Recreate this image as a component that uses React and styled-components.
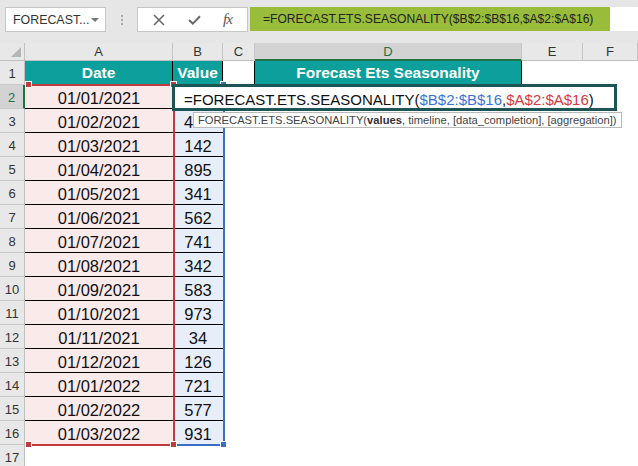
import React from "react";
import styled, { createGlobalStyle } from "styled-components";

const GlobalStyle = createGlobalStyle`
  html, body { margin: 0; padding: 0; background: #ffffff; }
  body { font-family: "Liberation Sans", Arial, sans-serif; overflow: hidden; }
`;

const ROW_HDR = 25;
const COLS = [148, 50, 32, 267, 61];
const ROW_H = 24;
const HEAD_H = 18;
const TEAL = "#0d9f9c";
const RED = "#c23a3c";
const BLUE = "#3a6fc8";
const GREEN = "#217346";

const Page = styled.div`
  width: 638px;
  height: 466px;
  overflow: hidden;
  background: #fff;
`;

const Toolbar = styled.div`
  height: 43px;
  box-sizing: border-box;
  background: #e6e6e6;
  display: flex;
  align-items: flex-start;
  padding: 7px 0 0 5px;
`;

const NameBox = styled.div`
  width: 101px;
  height: 25px;
  box-sizing: border-box;
  background: #fff;
  border: 1px solid #c6c6c6;
  display: flex;
  align-items: center;
  justify-content: space-between;
  padding: 0 6px 0 7px;
  font-size: 12.4px;
  color: #333;
`;

const Caret = styled.span`
  width: 0;
  height: 0;
  border-left: 4px solid transparent;
  border-right: 4px solid transparent;
  border-top: 4px solid #777;
  margin-top: 1px;
`;

const Grip = styled.div`
  width: 31px;
  height: 25px;
  display: flex;
  flex-direction: column;
  align-items: center;
  justify-content: center;
  gap: 2px;
  span {
    width: 2px;
    height: 2px;
    background: #a8a8a8;
  }
`;

const IconBox = styled.div`
  width: 111px;
  height: 25px;
  box-sizing: border-box;
  background: #fff;
  border: 1px solid #c6c6c6;
  display: flex;
  align-items: center;
  justify-content: space-around;
  padding: 0 4px;
  color: #6a6a6a;
`;

const Fx = styled.span`
  font-family: "Liberation Serif", "Times New Roman", serif;
  font-style: italic;
  font-size: 15px;
  color: #555;
  letter-spacing: -1px;
`;

const FormulaBox = styled.div`
  flex: 1;
  height: 24px;
  margin-left: 2px;
  background: #fff;
  display: flex;
`;

const FormulaFill = styled.div`
  width: 360px;
  background: #99bd3b;
  display: flex;
  align-items: center;
  padding-left: 13px;
  box-sizing: border-box;
  font-size: 12.1px;
  color: #222;
  white-space: nowrap;
`;

const Sheet = styled.div`
  position: relative;
`;

const Grid = styled.div`
  display: grid;
  grid-template-columns: ${ROW_HDR}px ${COLS.map((c) => c + "px").join(" ")} 1fr;
  grid-template-rows: ${HEAD_H}px repeat(17, ${ROW_H}px);
`;

const Corner = styled.div`
  background: #e8e8e8;
  border-right: 1px solid #c0c0c0;
  border-bottom: 1px solid #c0c0c0;
  box-sizing: border-box;
  position: relative;
  &::after {
    content: "";
    position: absolute;
    right: 3px;
    bottom: 3px;
    width: 0;
    height: 0;
    border-left: 10px solid transparent;
    border-bottom: 10px solid #b5b5b5;
  }
`;

const ColHead = styled.div`
  background: ${(p) => (p.$active ? "#d3d3d3" : "#e8e8e8")};
  color: ${(p) => (p.$active ? GREEN : "#333")};
  border-right: 1px solid #c6c6c6;
  border-bottom: ${(p) => (p.$active ? `2px solid ${GREEN}` : "1px solid #c0c0c0")};
  box-sizing: border-box;
  font-size: 13px;
  line-height: 17px;
  text-align: center;
`;

const RowHead = styled.div`
  background: ${(p) => (p.$active ? "#d3d3d3" : "#e8e8e8")};
  color: ${(p) => (p.$active ? GREEN : "#333")};
  border-right: ${(p) => (p.$active ? `2px solid ${GREEN}` : "1px solid #c0c0c0")};
  border-bottom: 1px solid #c8c8c8;
  box-sizing: border-box;
  font-size: 13px;
  padding-top: 2px;
  line-height: 21px;
  text-align: center;
`;

const fills = {
  teal: TEAL,
  pink: "#faeaea",
  blue: "#e8eef9",
  white: "#ffffff",
};

const Cell = styled.div`
  background: ${(p) => fills[p.$fill || "white"]};
  color: ${(p) => (p.$fill === "teal" ? "#fff" : "#111")};
  font-weight: ${(p) => (p.$head ? 700 : 400)};
  font-size: ${(p) => (p.$head ? "15.5px" : "16.5px")};
  line-height: ${(p) => (p.$head ? "24px" : "22px")};
  padding-top: ${(p) => (p.$head ? 0 : 2)}px;
  text-align: center;
  white-space: nowrap;
  overflow: hidden;
  box-sizing: border-box;
  border-right: ${(p) => (p.$edge ? "1px solid #000" : "none")};
  border-bottom: ${(p) => (p.$line ? "1px solid #000" : "none")};
`;

const Range = styled.div`
  position: absolute;
  box-sizing: border-box;
  border: 2px solid ${(p) => p.$color};
  border-left: none;
  pointer-events: none;
`;

const Handle = styled.div`
  position: absolute;
  width: 5px;
  height: 5px;
  background: ${(p) => p.$color};
  outline: 1px solid #fff;
`;

const EditBox = styled.div`
  position: absolute;
  left: 172px;
  top: ${HEAD_H + ROW_H - 1}px;
  width: 445px;
  height: 27px;
  box-sizing: border-box;
  border: 3px solid #1d5455;
  background: #fff;
  padding: 5px 0 0 9px;
  font-size: 15px;
  line-height: 16px;
  color: #111;
  white-space: nowrap;
`;

const Ref = styled.span`
  color: ${(p) => p.$color};
`;

const Tip = styled.div`
  position: absolute;
  left: 193px;
  top: 69px;
  height: 16px;
  box-sizing: border-box;
  border: 1px solid #b9b9b9;
  background: #fff;
  padding: 0 4px;
  font-size: 11.2px;
  line-height: 14px;
  color: #444;
  white-space: nowrap;
  b { font-weight: 700; color: #333; }
`;

const dates = [
  "01/01/2021", "01/02/2021", "01/03/2021", "01/04/2021", "01/05/2021",
  "01/06/2021", "01/07/2021", "01/08/2021", "01/09/2021", "01/10/2021",
  "01/11/2021", "01/12/2021", "01/01/2022", "01/02/2022", "01/03/2022",
];
// B2 sits under the cell editor, B3 mostly under the tooltip
const values = ["", 4, 142, 895, 341, 562, 741, 342, 583, 973, 34, 126, 721, 577, 931];

const letters = ["A", "B", "C", "D", "E", "F"];

function CloseIcon() {
  return (
    <svg width="12" height="12" viewBox="0 0 12 12">
      <path d="M1 1 L11 11 M11 1 L1 11" stroke="#6a6a6a" strokeWidth="1.6" />
    </svg>
  );
}

function CheckIcon() {
  return (
    <svg width="13" height="10" viewBox="0 0 13 10">
      <path d="M1 5 L4.8 8.6 L12 1.2" stroke="#6a6a6a" strokeWidth="2" fill="none" />
    </svg>
  );
}

const ClipLeft = styled.span`
  display: inline-block;
  width: 100%;
  text-align: left;
  padding-left: 11px;
  box-sizing: border-box;
`;

export default function App() {
  const left = (i) => ROW_HDR + COLS.slice(0, i).reduce((a, b) => a + b, 0);
  const rangeTop = HEAD_H + ROW_H - 1;
  const rangeH = ROW_H * 15 + 2;

  return (
    <Page>
      <GlobalStyle />
      <Toolbar>
        <NameBox>
          FORECAST...
          <Caret />
        </NameBox>
        <Grip>
          <span />
          <span />
          <span />
        </Grip>
        <IconBox>
          <CloseIcon />
          <CheckIcon />
          <Fx>fx</Fx>
        </IconBox>
        <FormulaBox>
          <FormulaFill>=FORECAST.ETS.SEASONALITY($B$2:$B$16,$A$2:$A$16)</FormulaFill>
        </FormulaBox>
      </Toolbar>

      <Sheet>
        <Grid>
          <Corner />
          {letters.map((l) => (
            <ColHead key={l} $active={l === "D"}>{l}</ColHead>
          ))}

          <RowHead>1</RowHead>
          <Cell $fill="teal" $head $edge>Date</Cell>
          <Cell $fill="teal" $head $edge>Value</Cell>
          <Cell $edge />
          <Cell $fill="teal" $head $edge>Forecast Ets Seasonality</Cell>
          <Cell />
          <Cell />

          {dates.map((d, i) => (
            <React.Fragment key={d}>
              <RowHead $active={i === 0}>{i + 2}</RowHead>
              <Cell $fill="pink" $line={i < 14}>{d}</Cell>
              <Cell $fill="blue" $line={i < 14}>
                {i === 1 ? <ClipLeft>{values[i]}</ClipLeft> : values[i]}
              </Cell>
              <Cell />
              <Cell />
              <Cell />
              <Cell />
            </React.Fragment>
          ))}

          <RowHead>17</RowHead>
          <Cell />
          <Cell />
          <Cell />
          <Cell />
          <Cell />
          <Cell />
        </Grid>

        <Range
          $color={BLUE}
          style={{ left: left(1) + 1, top: rangeTop, width: COLS[1] + 1, height: rangeH }}
        />
        <Range
          $color={RED}
          style={{ left: left(0) + 1, top: rangeTop, width: COLS[0] + 1, height: rangeH }}
        />
        <Handle $color={RED} style={{ left: left(0) + 1, top: rangeTop - 2 }} />
        <Handle $color={RED} style={{ left: left(1) - 2, top: rangeTop - 2 }} />
        <Handle $color={RED} style={{ left: left(1) - 2, top: rangeTop + rangeH - 4 }} />
        <Handle $color={RED} style={{ left: left(0) + 1, top: rangeTop + rangeH - 4 }} />
        <Handle $color={BLUE} style={{ left: left(2) - 2, top: rangeTop - 2 }} />
        <Handle $color={BLUE} style={{ left: left(2) - 2, top: rangeTop + rangeH - 4 }} />

        <EditBox>
          =FORECAST.ETS.SEASONALITY(<Ref $color="#3a72d6">$B$2:$B$16</Ref>,
          <Ref $color="#d8393c">$A$2:$A$16</Ref>)
        </EditBox>
        <Tip>
          FORECAST.ETS.SEASONALITY(<b>values</b>, timeline, [data_completion], [aggregation])
        </Tip>
      </Sheet>
    </Page>
  );
}
